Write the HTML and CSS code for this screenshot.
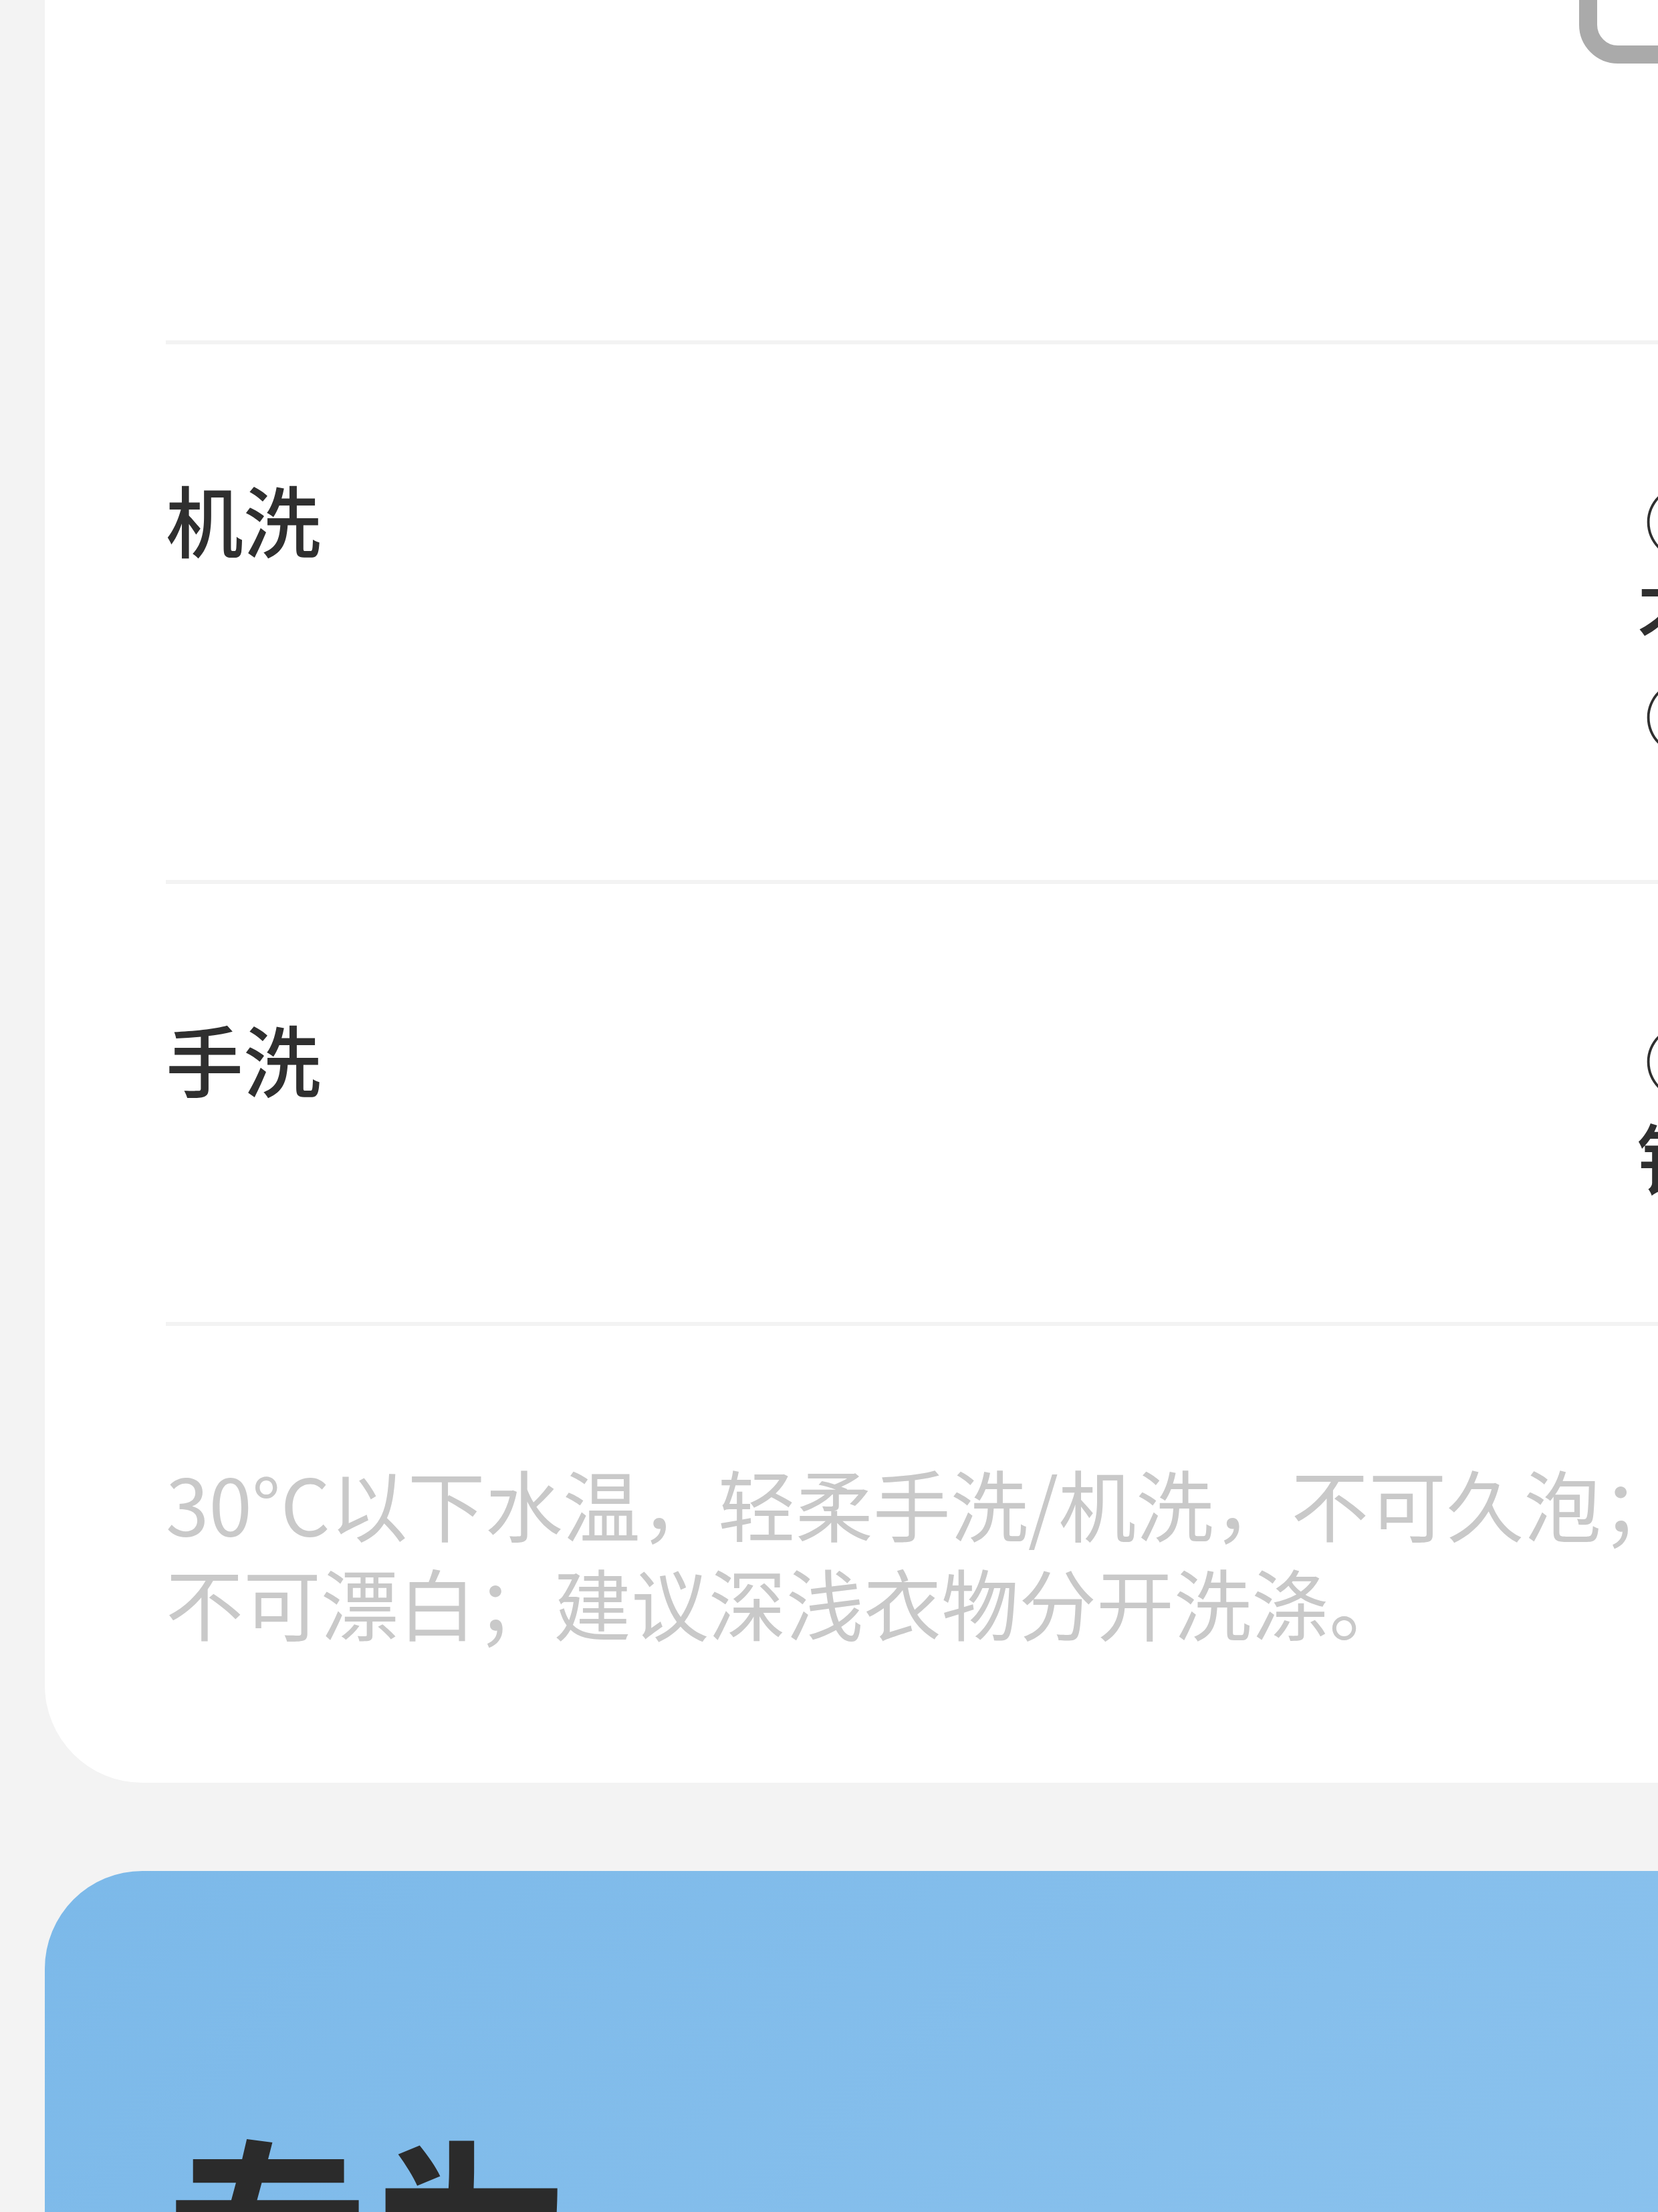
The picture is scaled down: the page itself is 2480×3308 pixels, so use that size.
FILE: index.html
```html
<!DOCTYPE html>
<html lang="zh-CN">
<head>
<meta charset="utf-8">
<title>洗涤说明</title>
<link rel="stylesheet" href="styles.css">
</head>
<body>
<main class="page">
  <section class="card care-card">
    <div class="row row-top">
      <div class="label"></div>
      <div class="value">
        <div class="swatch"></div>
      </div>
    </div>
    <div class="row">
      <div class="label">机洗</div>
      <div class="value">
        <div class="line"><span class="num">①</span>选择轻柔洗涤模式</div>
        <div class="line">不可使用烘干功能</div>
        <div class="line"><span class="num">②</span>建议装入洗衣袋</div>
      </div>
    </div>
    <div class="row">
      <div class="label">手洗</div>
      <div class="value">
        <div class="line"><span class="num">①</span>30°C以下温水浸泡</div>
        <div class="line">针织部位轻柔揉洗</div>
      </div>
    </div>
    <p class="desc">30°C以下水温，轻柔手洗/机洗，不可久泡；<br>不可漂白；建议深浅衣物分开洗涤。</p>
  </section>
  <section class="card promo-card">
    <h2 class="promo-title">专为</h2>
  </section>
</main>
</body>
</html>
```

FILE: styles.css
```css
html, body {
  margin: 0;
  padding: 0;
  background: #f3f3f3;
  overflow: hidden;
  width: 2480px;
  height: 3308px;
}

body {
  font-family: "Noto Sans CJK SC", "Noto Sans", sans-serif;
}

.page {
  padding-left: 67px;
  display: flex;
  flex-direction: column;
}

.card {
  width: 3000px;
  box-sizing: border-box;
  border-radius: 146px;
  padding: 0 181px;
}

.care-card {
  margin-top: -400px;
  background: #ffffff;
}

.row {
  display: grid;
  grid-template-columns: 2200px 1fr;
  padding: 186px 0 177px;
  border-top: 6px solid #f3f3f3;
}

.row-top {
  border-top: none;
  padding: 186px 0 414px;
}

.label,
.value {
  font-size: 116px;
  line-height: 146px;
  font-weight: 500;
  color: #2f2f2f;
  white-space: nowrap;
}

.num {
  display: inline-block;
  margin-left: 12px;
}

.swatch {
  box-sizing: border-box;
  width: 300px;
  height: 309px;
  margin-left: -86px;
  border: 27px solid #aaaaaa;
  border-radius: 58px;
}

.desc {
  margin: 0;
  padding: 189px 0 198px;
  border-top: 6px solid #f3f3f3;
  font-size: 116px;
  line-height: 148px;
  font-weight: 400;
  color: #c9c9c9;
  white-space: nowrap;
}

.promo-card {
  margin-top: 132px;
  height: 1200px;
  padding-top: 346px;
  background: linear-gradient(135deg, #7cb9e9 0%, #86bfec 50%, #8fc5ef 100%);
}

.promo-title {
  margin: 0;
  font-size: 306px;
  line-height: 367px;
  font-weight: 700;
  color: #2b2b2b;
}
```
